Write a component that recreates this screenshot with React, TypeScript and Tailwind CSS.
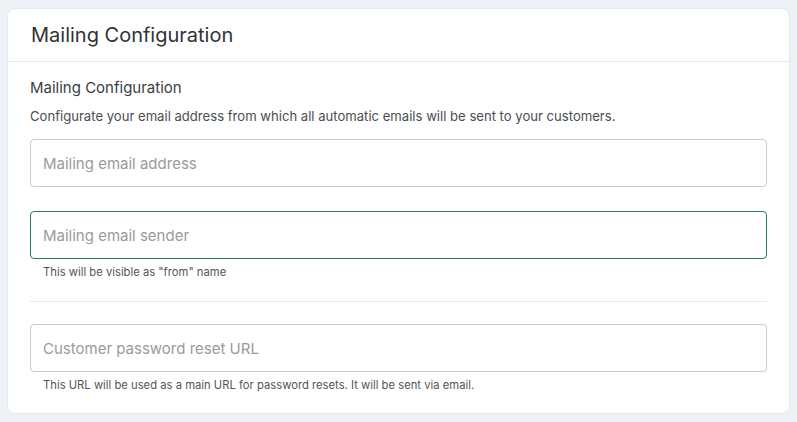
export default function App() {
  return (
    <div
      className="min-h-[422px] w-full bg-[#eef2f7] px-[7px] pt-[8px] pb-[9px]"
      style={{ fontFamily: 'Inter, "Noto Sans", sans-serif' }}
    >
      <div className="rounded-[8px] border border-[#e4e8ee] bg-white">
        <div className="flex h-[53px] items-center border-b border-[#e6e8eb] px-[23px]">
          <h1 className="text-[20px] font-normal text-[#2f3337]">Mailing Configuration</h1>
        </div>
        <div className="px-[22px] pt-4 pb-5">
          <div className="text-[15px] leading-5 text-[#3a3e42]">Mailing Configuration</div>
          <p className="mt-[8px] text-[13.1px] leading-5 text-[#4a4e52]">
            Configurate your email address from which all automatic emails will be sent to your customers.
          </p>
          <input
            placeholder="Mailing email address"
            className="mt-[13px] block h-[48px] w-full rounded-[4px] border border-[#c9c9c9] px-[12px] text-[15px] text-[#333] placeholder:text-[#9a9a9a] outline-none"
          />
          <input
            placeholder="Mailing email sender"
            className="mt-6 block h-[48px] w-full rounded-[4px] border border-[#2a776d] px-[12px] text-[15px] text-[#333] placeholder:text-[#9a9a9a] outline-none"
          />
          <div className="mt-[5px] pl-[13px] text-[11.25px] leading-4 text-[#555]">This will be visible as "from" name</div>
          <div className="mt-[21px] h-px bg-[#e8eaed]" />
          <input
            placeholder="Customer password reset URL"
            className="mt-[22px] block h-[48px] w-full rounded-[4px] border border-[#c9c9c9] px-[12px] text-[15px] text-[#333] placeholder:text-[#9a9a9a] outline-none"
          />
          <div className="mt-[5px] pl-[13px] text-[11.25px] leading-4 text-[#555]">
            This URL will be used as a main URL for password resets. It will be sent via email.
          </div>
        </div>
      </div>
    </div>
  )
}
